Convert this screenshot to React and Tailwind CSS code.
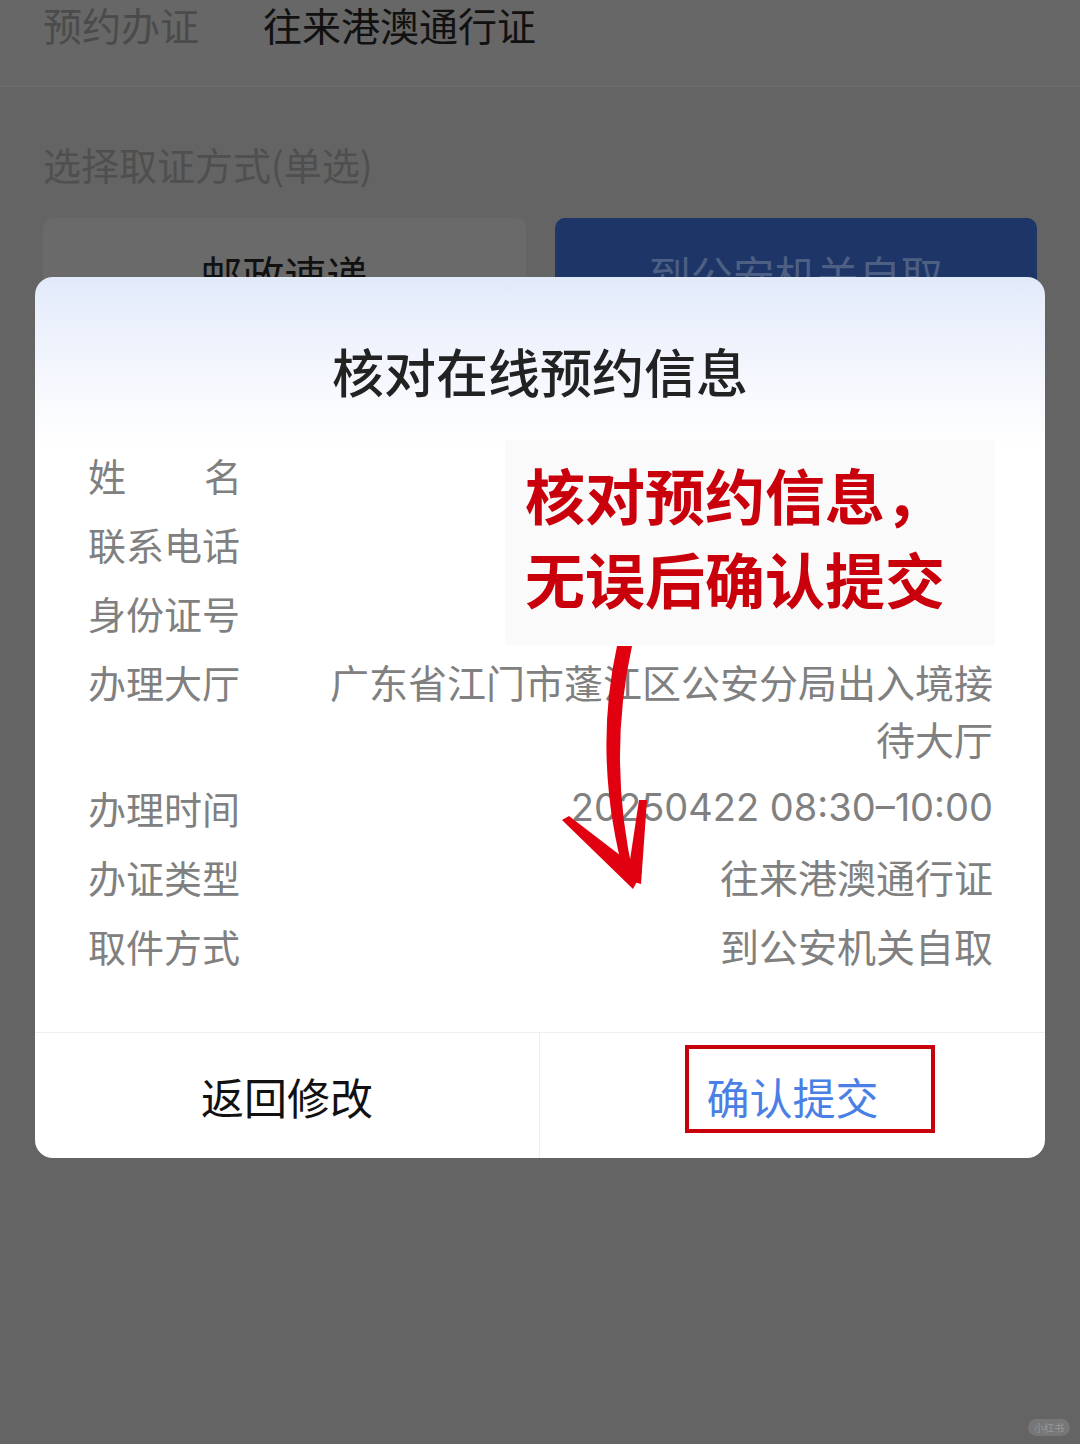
const rows = [
  { label: '联系电话', value: '' },
  { label: '身份证号', value: '' },
  { label: '办理大厅', value: '广东省江门市蓬江区公安分局出入境接待大厅' },
  { label: '办理时间', value: '20250422 08:30–10:00', small: true },
  { label: '办证类型', value: '往来港澳通行证' },
  { label: '取件方式', value: '到公安机关自取' },
];

const cjk = "font-['Noto_Sans_CJK_SC',sans-serif]";

const App = () => {
  return (
    <div className={`relative w-[1080px] h-[1444px] overflow-hidden bg-[#646464] ${cjk}`}>
      {/* page behind the dialog */}
      <div className="h-[87px] bg-[#676767] border-b border-[#6f6f6f] flex items-start gap-[64px] px-[43px] pt-[2px]">
        <span className="text-[39px] leading-[44px] text-[#4b4b4b]">预约办证</span>
        <span className="text-[39px] leading-[44px] text-[#111]">往来港澳通行证</span>
      </div>
      <div className="px-[43px] pt-[54px]">
        <p className="text-[38px] leading-[46px] text-[#4f4f4f]">选择取证方式(单选)</p>
        <div className="mt-[31px] grid grid-cols-2 gap-[29px]">
          <div className="h-[140px] rounded-[10px] bg-[#6a6a6a] flex justify-center pt-[30px]">
            <span className="text-[42px] leading-[52px] text-[#111]">邮政速递</span>
          </div>
          <div className="h-[140px] rounded-[10px] bg-[#1d3567] flex justify-center pt-[30px]">
            <span className="text-[42px] leading-[52px] text-[#4e5f84]">到公安机关自取</span>
          </div>
        </div>
      </div>

      {/* dialog */}
      <div className="absolute left-[35px] top-[277px] w-[1010px] h-[881px] rounded-[18px] overflow-hidden bg-[linear-gradient(180deg,#e2eafa_0px,#f3f6fd_90px,#ffffff_170px)] flex flex-col">
        <h1 className="pt-[64px] text-center text-[52px] leading-[60px] font-medium text-[#222]">
          核对在线预约信息
        </h1>
        <div className="flex-1 pt-[45px] pl-[53px] pr-[52px] flex flex-col gap-[12px]">
          <div className="flex text-[38px] leading-[57px] text-[#808080]">
            <div className="w-[154px] flex justify-between shrink-0">
              <span>姓</span>
              <span>名</span>
            </div>
          </div>
          {rows.map((row) => (
            <div key={row.label} className="flex text-[38px] leading-[57px] text-[#808080]">
              <div className="w-[154px] shrink-0">{row.label}</div>
              <div
                className={
                  row.small
                    ? "flex-1 pl-[85px] text-right text-[38px] font-['Inter','Noto_Sans_CJK_SC',sans-serif]"
                    : 'flex-1 pl-[85px] text-right text-[39px]'
                }
              >
                {row.value}
              </div>
            </div>
          ))}
        </div>
        <div className="h-[126px] border-t border-[#efefef] grid grid-cols-2">
          <div className="flex items-center justify-center border-r border-[#efefef]">
            <span className="text-[43px] leading-[52px] text-[#111]">返回修改</span>
          </div>
          <div className="flex items-center justify-center">
            <span className="text-[43px] leading-[52px] text-[#4a80e6]">确认提交</span>
          </div>
        </div>

        {/* annotation */}
        <div className="absolute left-[470px] top-[163px] w-[490px] h-[205px] bg-[#fafafa] pl-[20px] pt-[12px]">
          <p className="text-[60px] leading-[84px] font-bold text-[#c9000b]">核对预约信息，</p>
          <p className="text-[60px] leading-[84px] font-bold text-[#c9000b]">无误后确认提交</p>
        </div>
        <div className="absolute left-[650px] top-[768px] w-[250px] h-[88px] border-4 border-[#c8000c]" />
      </div>

      {/* hand drawn arrow */}
      <svg className="absolute left-0 top-0 pointer-events-none" width="1080" height="1444" viewBox="0 0 1080 1444">
        <path d="M617 646 L632 646 Q607 760 634 878 L626 882 Q592 760 617 646 Z" fill="#e0000f" />
        <path d="M562 820 L569 816 L642 872 L633 889 Z" fill="#e0000f" />
        <path d="M639 800 L647 800 L641 884 L627 880 Z" fill="#e0000f" />
      </svg>

      {/* watermark */}
      <div className="absolute right-[10px] bottom-[8px] px-[6px] h-[17px] rounded-full bg-[#777] flex items-center">
        <span className="text-[10px] leading-[10px] text-[#999]">小红书</span>
      </div>
    </div>
  );
};

export default App;
